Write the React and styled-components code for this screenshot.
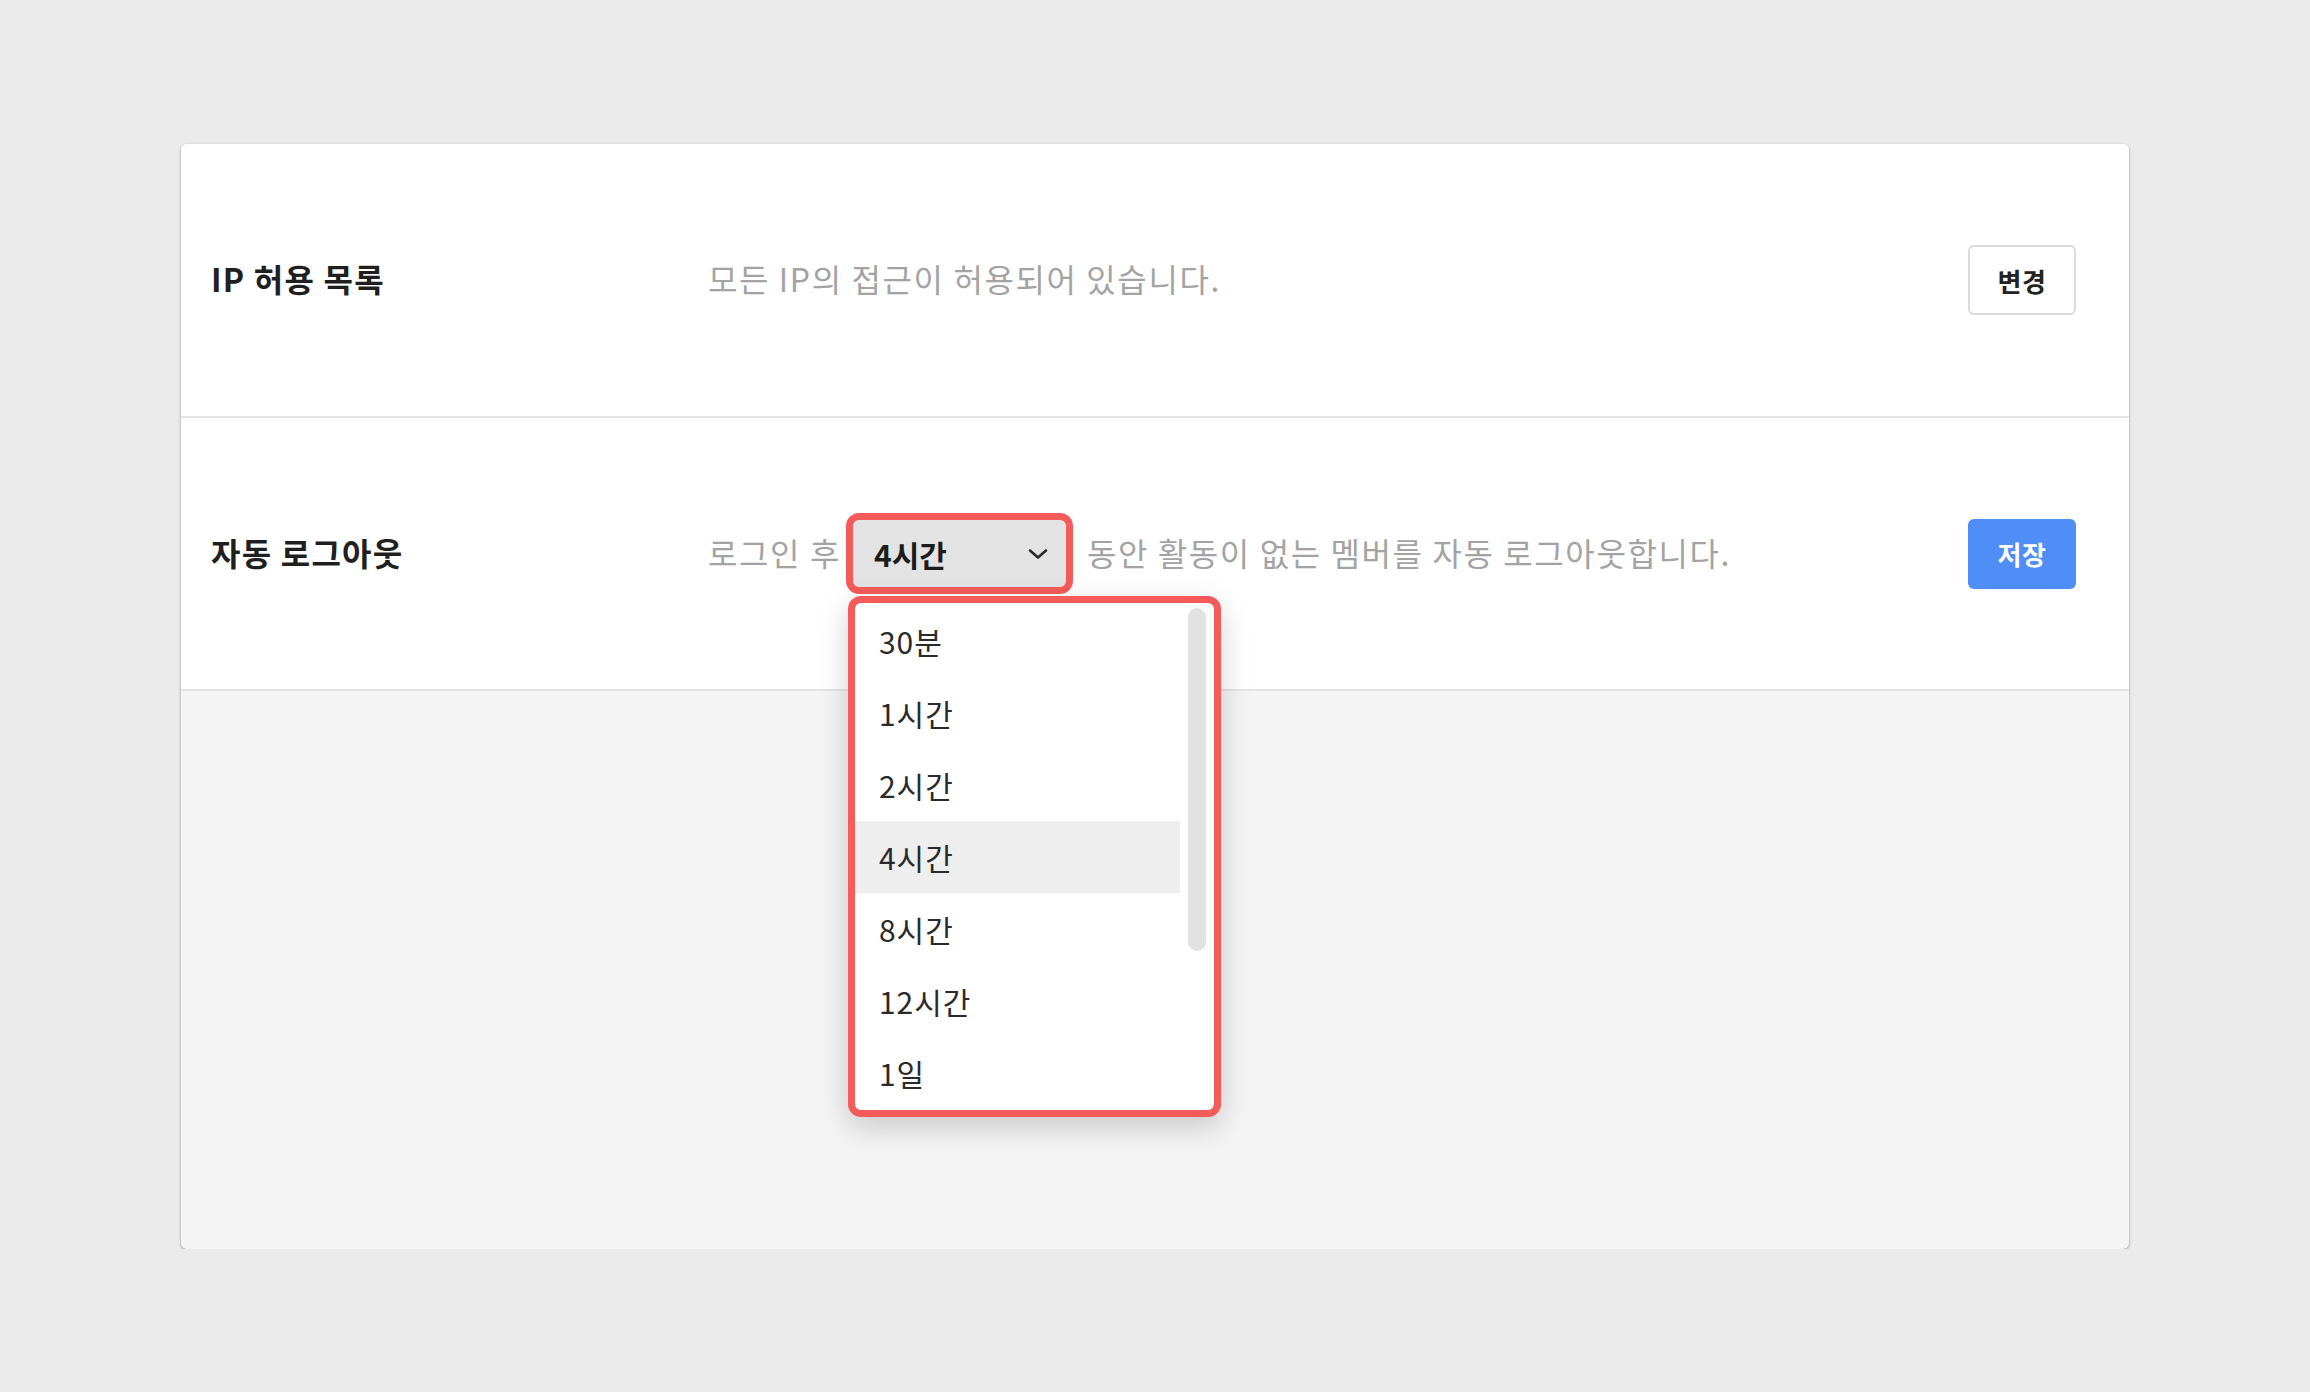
import React from 'react';
import styled, { createGlobalStyle } from 'styled-components';

const GlobalStyle = createGlobalStyle`
  html, body {
    margin: 0;
    padding: 0;
    background: #ebebeb;
  }
  body {
    font-family: "Noto Sans CJK KR", "Noto Sans", sans-serif;
    color: #222;
  }
`;

const Page = styled.div`
  padding: 144px 181px 0;
`;

const Card = styled.div`
  height: 1105px;
  background: #f4f4f4;
  border-radius: 6px;
  box-shadow: 0 1px 3px rgba(0, 0, 0, 0.38);
  display: flex;
  flex-direction: column;
`;

const Row = styled.div`
  height: ${(p) => p.h}px;
  background: #fff;
  border-bottom: 2px solid #e4e4e4;
  display: grid;
  grid-template-columns: 497px 1fr auto;
  align-items: center;
  padding: 0 53px 0 30px;
  &:first-child {
    border-radius: 6px 6px 0 0;
  }
`;

const Label = styled.div`
  font-size: 32px;
  font-weight: 700;
  letter-spacing: 1.2px;
  color: #1f1f1f;
  margin-top: -4px;
`;

const Desc = styled.div`
  display: flex;
  align-items: center;
  font-size: 32px;
  letter-spacing: 1.6px;
  color: #a3a3a3;
  white-space: nowrap;
  margin-top: -4px;
`;

const Button = styled.button`
  width: 108px;
  height: 70px;
  border-radius: 6px;
  font-family: inherit;
  font-size: 26px;
  font-weight: 700;
  letter-spacing: 0.5px;
  cursor: pointer;
  border: ${(p) => (p.primary ? 'none' : '2px solid #dadada')};
  background: ${(p) => (p.primary ? '#4f8ef7' : '#fff')};
  color: ${(p) => (p.primary ? '#fff' : '#222')};
`;

const SelectWrap = styled.div`
  position: relative;
  margin: 4px 21px 0 12px;
  letter-spacing: 0;
`;

const SelectBox = styled.div`
  width: 213px;
  height: 67px;
  box-sizing: border-box;
  padding: 0 18px 0 21px;
  background: #e3e3e3;
  border-radius: 6px;
  box-shadow: 0 0 0 7px #f65b5b;
  display: flex;
  align-items: center;
  justify-content: space-between;
  font-size: 30px;
  font-weight: 700;
  color: #1c1c1c;
`;

const Menu = styled.div`
  position: absolute;
  top: 76px;
  left: -5px;
  width: 373px;
  height: 521px;
  box-sizing: border-box;
  border: 7px solid #f65b5b;
  border-radius: 13px;
  background: #fff;
  box-shadow: 0 10px 30px rgba(0, 0, 0, 0.18);
  overflow: hidden;
  z-index: 2;
`;

const List = styled.ul`
  list-style: none;
  margin: 0 34px 0 0;
  padding: 2px 0 0;
`;

const ScrollThumb = styled.div`
  position: absolute;
  top: 5px;
  right: 8px;
  width: 18px;
  height: 343px;
  border-radius: 9px;
  background: #e2e2e2;
`;

const Item = styled.li`
  height: 72px;
  display: flex;
  align-items: center;
  padding-left: 24px;
  font-size: 30px;
  letter-spacing: 1px;
  color: #2a2a2a;
  background: ${(p) => (p.active ? '#eeeeee' : 'transparent')};
`;

const Chevron = () => (
  <svg width="20" height="10" viewBox="0 0 20 10" fill="none">
    <polyline points="2,1.5 10,8.5 18,1.5" stroke="#2b2b2b" strokeWidth="2.6" strokeLinecap="round" strokeLinejoin="round" />
  </svg>
);

const options = ['30분', '1시간', '2시간', '4시간', '8시간', '12시간', '1일'];

const App = () => {
  const selected = '4시간';
  return (
    <Page>
      <GlobalStyle />
      <Card>
        <Row h={272}>
          <Label>IP 허용 목록</Label>
          <Desc>모든 IP의 접근이 허용되어 있습니다.</Desc>
          <Button>변경</Button>
        </Row>
        <Row h={271}>
          <Label>자동 로그아웃</Label>
          <Desc>
            로그인 후
            <SelectWrap>
              <SelectBox>
                {selected}
                <Chevron />
              </SelectBox>
              <Menu>
                <List>
                  {options.map((o) => (
                    <Item key={o} active={o === selected}>
                      {o}
                    </Item>
                  ))}
                </List>
                <ScrollThumb />
              </Menu>
            </SelectWrap>
            동안 활동이 없는 멤버를 자동 로그아웃합니다.
          </Desc>
          <Button primary>저장</Button>
        </Row>
      </Card>
    </Page>
  );
};

export default App;
